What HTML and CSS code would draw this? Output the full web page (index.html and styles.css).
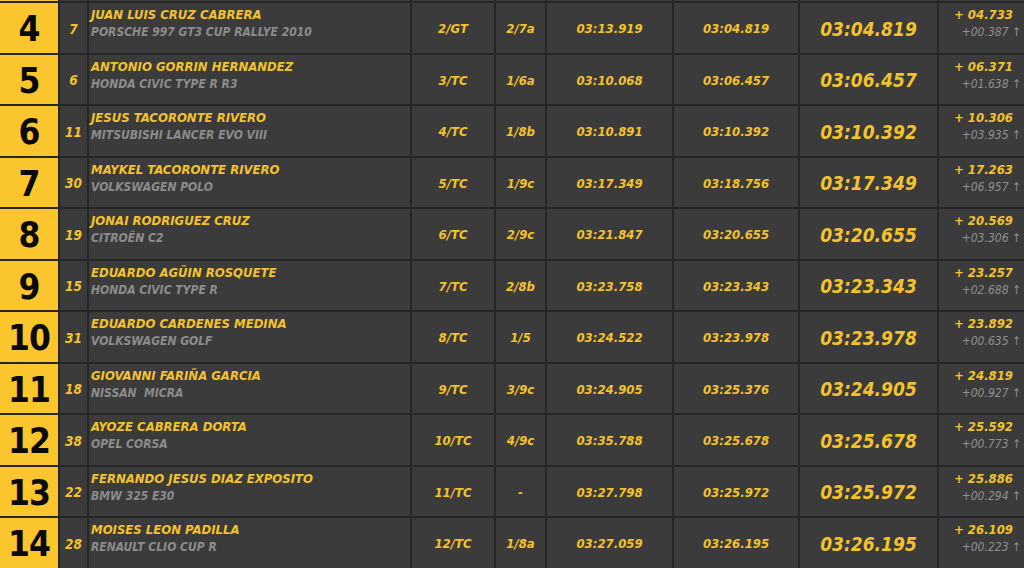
FILE: index.html
```html
<!DOCTYPE html>
<html lang="es">
<head>
<meta charset="utf-8">
<title>Clasificación</title>
<link rel="stylesheet" href="styles.css">
</head>
<body>
<div class="board">
  <div class="row row-cut">
    <div class="cell pos"></div><div class="cell num"></div><div class="cell name"></div><div class="cell cls"></div><div class="cell grp"></div><div class="cell t1"></div><div class="cell t2"></div><div class="cell total"></div><div class="cell diff"></div>
  </div>
  <div class="row">
    <div class="cell pos">4</div><div class="cell num">7</div>
    <div class="cell name"><div class="driver">JUAN LUIS CRUZ CABRERA</div><div class="car">PORSCHE 997 GT3 CUP RALLYE 2010</div></div>
    <div class="cell cls">2/GT</div><div class="cell grp">2/7a</div><div class="cell t1">03:13.919</div><div class="cell t2">03:04.819</div><div class="cell total">03:04.819</div>
    <div class="cell diff"><div class="gap">+ 04.733</div><div class="prev">+00.387 <span class="arrow">↑</span></div></div>
  </div>
  <div class="row">
    <div class="cell pos">5</div><div class="cell num">6</div>
    <div class="cell name"><div class="driver">ANTONIO GORRIN HERNANDEZ</div><div class="car">HONDA CIVIC TYPE R R3</div></div>
    <div class="cell cls">3/TC</div><div class="cell grp">1/6a</div><div class="cell t1">03:10.068</div><div class="cell t2">03:06.457</div><div class="cell total">03:06.457</div>
    <div class="cell diff"><div class="gap">+ 06.371</div><div class="prev">+01.638 <span class="arrow">↑</span></div></div>
  </div>
  <div class="row">
    <div class="cell pos">6</div><div class="cell num">11</div>
    <div class="cell name"><div class="driver">JESUS TACORONTE RIVERO</div><div class="car">MITSUBISHI LANCER EVO VIII</div></div>
    <div class="cell cls">4/TC</div><div class="cell grp">1/8b</div><div class="cell t1">03:10.891</div><div class="cell t2">03:10.392</div><div class="cell total">03:10.392</div>
    <div class="cell diff"><div class="gap">+ 10.306</div><div class="prev">+03.935 <span class="arrow">↑</span></div></div>
  </div>
  <div class="row">
    <div class="cell pos">7</div><div class="cell num">30</div>
    <div class="cell name"><div class="driver">MAYKEL TACORONTE RIVERO</div><div class="car">VOLKSWAGEN POLO</div></div>
    <div class="cell cls">5/TC</div><div class="cell grp">1/9c</div><div class="cell t1">03:17.349</div><div class="cell t2">03:18.756</div><div class="cell total">03:17.349</div>
    <div class="cell diff"><div class="gap">+ 17.263</div><div class="prev">+06.957 <span class="arrow">↑</span></div></div>
  </div>
  <div class="row">
    <div class="cell pos">8</div><div class="cell num">19</div>
    <div class="cell name"><div class="driver">JONAI RODRIGUEZ CRUZ</div><div class="car">CITROËN C2</div></div>
    <div class="cell cls">6/TC</div><div class="cell grp">2/9c</div><div class="cell t1">03:21.847</div><div class="cell t2">03:20.655</div><div class="cell total">03:20.655</div>
    <div class="cell diff"><div class="gap">+ 20.569</div><div class="prev">+03.306 <span class="arrow">↑</span></div></div>
  </div>
  <div class="row">
    <div class="cell pos">9</div><div class="cell num">15</div>
    <div class="cell name"><div class="driver">EDUARDO AGÜIN ROSQUETE</div><div class="car">HONDA CIVIC TYPE R</div></div>
    <div class="cell cls">7/TC</div><div class="cell grp">2/8b</div><div class="cell t1">03:23.758</div><div class="cell t2">03:23.343</div><div class="cell total">03:23.343</div>
    <div class="cell diff"><div class="gap">+ 23.257</div><div class="prev">+02.688 <span class="arrow">↑</span></div></div>
  </div>
  <div class="row">
    <div class="cell pos">10</div><div class="cell num">31</div>
    <div class="cell name"><div class="driver">EDUARDO CARDENES MEDINA</div><div class="car">VOLKSWAGEN GOLF</div></div>
    <div class="cell cls">8/TC</div><div class="cell grp">1/5</div><div class="cell t1">03:24.522</div><div class="cell t2">03:23.978</div><div class="cell total">03:23.978</div>
    <div class="cell diff"><div class="gap">+ 23.892</div><div class="prev">+00.635 <span class="arrow">↑</span></div></div>
  </div>
  <div class="row">
    <div class="cell pos">11</div><div class="cell num">18</div>
    <div class="cell name"><div class="driver">GIOVANNI FARIÑA GARCIA</div><div class="car">NISSAN&nbsp; MICRA</div></div>
    <div class="cell cls">9/TC</div><div class="cell grp">3/9c</div><div class="cell t1">03:24.905</div><div class="cell t2">03:25.376</div><div class="cell total">03:24.905</div>
    <div class="cell diff"><div class="gap">+ 24.819</div><div class="prev">+00.927 <span class="arrow">↑</span></div></div>
  </div>
  <div class="row">
    <div class="cell pos">12</div><div class="cell num">38</div>
    <div class="cell name"><div class="driver">AYOZE CABRERA DORTA</div><div class="car">OPEL CORSA</div></div>
    <div class="cell cls">10/TC</div><div class="cell grp">4/9c</div><div class="cell t1">03:35.788</div><div class="cell t2">03:25.678</div><div class="cell total">03:25.678</div>
    <div class="cell diff"><div class="gap">+ 25.592</div><div class="prev">+00.773 <span class="arrow">↑</span></div></div>
  </div>
  <div class="row">
    <div class="cell pos">13</div><div class="cell num">22</div>
    <div class="cell name"><div class="driver">FERNANDO JESUS DIAZ EXPOSITO</div><div class="car">BMW 325 E30</div></div>
    <div class="cell cls">11/TC</div><div class="cell grp">-</div><div class="cell t1">03:27.798</div><div class="cell t2">03:25.972</div><div class="cell total">03:25.972</div>
    <div class="cell diff"><div class="gap">+ 25.886</div><div class="prev">+00.294 <span class="arrow">↑</span></div></div>
  </div>
  <div class="row">
    <div class="cell pos">14</div><div class="cell num">28</div>
    <div class="cell name"><div class="driver">MOISES LEON PADILLA</div><div class="car">RENAULT CLIO CUP R</div></div>
    <div class="cell cls">12/TC</div><div class="cell grp">1/8a</div><div class="cell t1">03:27.059</div><div class="cell t2">03:26.195</div><div class="cell total">03:26.195</div>
    <div class="cell diff"><div class="gap">+ 26.109</div><div class="prev">+00.223 <span class="arrow">↑</span></div></div>
  </div>
</div>
</body>
</html>
```

FILE: styles.css
```css
html, body {
  margin: 0;
  padding: 0;
  background: #262626;
  overflow: hidden;
}

body {
  font-family: "DejaVu Sans Condensed", "DejaVu Sans", sans-serif;
  font-stretch: condensed;
  color: #f3c22c;
}

.board {
  display: flex;
  flex-direction: column;
  gap: 2px;
  margin-top: -48.5px;
  width: 1024px;
}

.row {
  display: grid;
  grid-template-columns: 58px 27px 321px 82px 49px 125px 124px 137px 85px;
  column-gap: 2px;
  height: 49.5px;
}

.cell {
  background: #3b3b3b;
  display: flex;
  align-items: center;
  justify-content: center;
  font-weight: bold;
  font-style: italic;
  font-size: 13px;
  white-space: nowrap;
  overflow: hidden;
}

.pos {
  background: #fbc52d;
  color: #0a0a0a;
  font-style: normal;
  font-size: 35px;
  padding-top: 3px;
  letter-spacing: -1px;
}

.num {
  padding-top: 2px;
  font-size: 13.5px;
}

.name {
  flex-direction: column;
  align-items: flex-start;
  justify-content: flex-start;
  padding: 3px 0 0 2px;
}

.driver {
  font-size: 13px;
  line-height: 17px;
}

.car {
  font-size: 12px;
  line-height: 18px;
  color: #8c8c8c;
}

.cls, .grp, .t1, .t2 {
  font-size: 13px;
  padding-top: 2px;
}

.total {
  font-size: 19px;
  padding-top: 2px;
}

.diff {
  flex-direction: column;
  align-items: flex-end;
  justify-content: flex-start;
  padding-top: 3px;
}

.gap {
  font-size: 13px;
  line-height: 17px;
  padding-right: 11px;
}

.prev {
  font-size: 12px;
  line-height: 18px;
  font-weight: normal;
  color: #8f8f8f;
  padding-right: 3px;
}

.arrow {
  font-style: normal;
  font-weight: normal;
}
```
